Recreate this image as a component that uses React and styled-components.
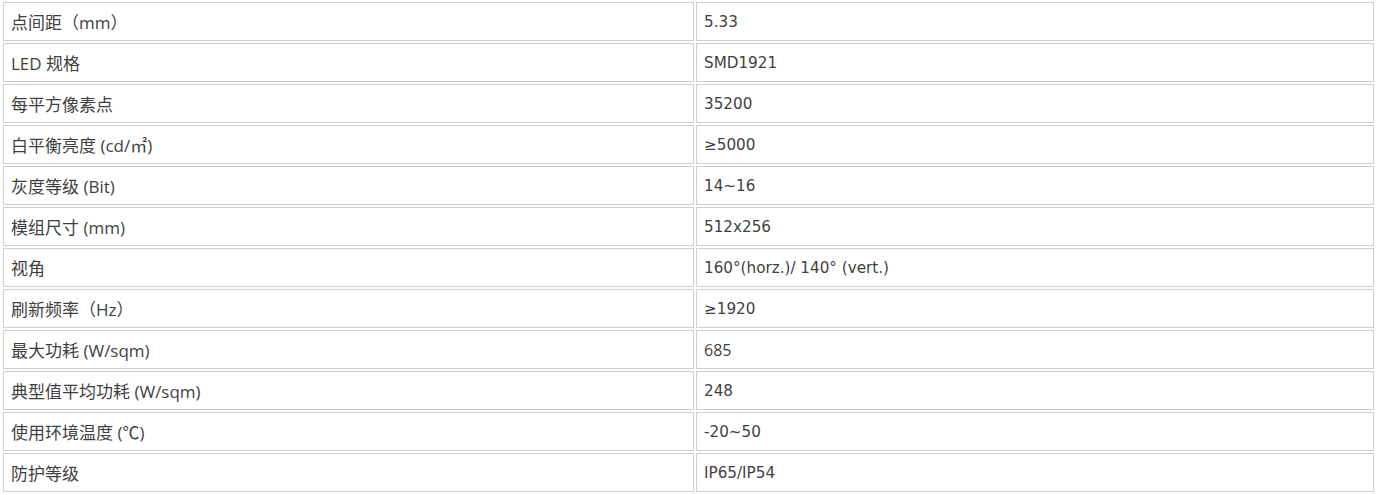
import React from "react";
import styled, { createGlobalStyle } from "styled-components";

const Global = createGlobalStyle`
  html, body { margin: 0; padding: 0; background: #fff; }
  body { font-family: "Noto Sans CJK SC", "Noto Sans", sans-serif; }
`;

const Wrap = styled.div`
  padding: 0 0 0 1px;
`;

const Table = styled.table`
  border-collapse: separate;
  border-spacing: 2px;
  width: 1375px;
  table-layout: fixed;
`;

const Cell = styled.td`
  box-sizing: border-box;
  height: 39px;
  width: ${(p) => p.$w}px;
  border: 1px solid #cfcfcf;
  padding: 0 7px;
  vertical-align: middle;
  color: #3f3f3f;
  white-space: nowrap;
`;

const Label = styled(Cell)`
  font-family: "Open Sans", "Noto Sans CJK SC", sans-serif;
  font-size: 17px;
  padding-bottom: 1px;
`;

const Value = styled(Cell)`
  font-family: ${(p) =>
    p.$plain ? '"Open Sans", "Noto Sans", sans-serif' : '"DejaVu Sans", "Noto Sans CJK SC", sans-serif'};
  font-size: ${(p) => (p.$plain ? "16px" : "15.2px")};
  padding-top: 1px;
`;

const rows = [
  ["点间距（mm）", "5.33"],
  ["LED 规格", "SMD1921"],
  ["每平方像素点", "35200"],
  ["白平衡亮度 (cd/㎡)", "≥5000"],
  ["灰度等级 (Bit)", "14~16"],
  ["模组尺寸 (mm)", "512x256"],
  ["视角", "160°(horz.)/ 140° (vert.)"],
  ["刷新频率（Hz）", "≥1920"],
  ["最大功耗 (W/sqm)", "685", true],
  ["典型值平均功耗 (W/sqm)", "248"],
  ["使用环境温度 (℃)", "-20~50"],
  ["防护等级", "IP65/IP54"],
];

export default function App() {
  return (
    <>
      <Global />
      <Wrap>
        <Table>
          <tbody>
            {rows.map(([k, v, plain]) => (
              <tr key={k}>
                <Label $w={691}>{k}</Label>
                <Value $w={678} $plain={plain}>{v}</Value>
              </tr>
            ))}
          </tbody>
        </Table>
      </Wrap>
    </>
  );
}
